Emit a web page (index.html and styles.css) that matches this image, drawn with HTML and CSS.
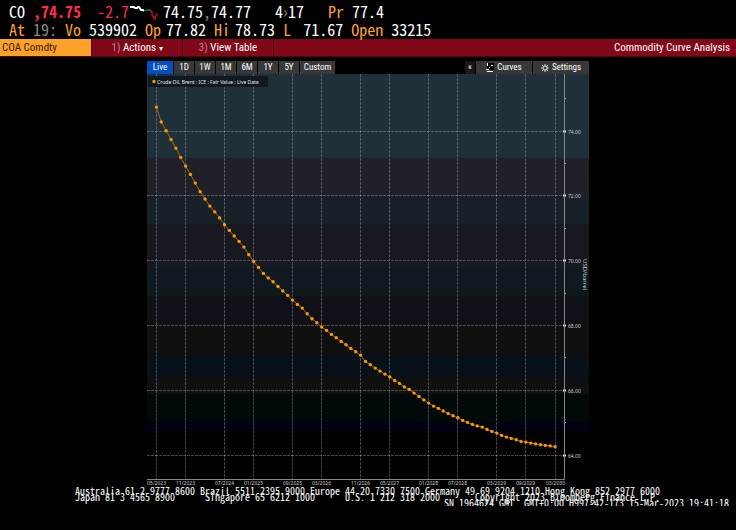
FILE: index.html
```html
<!DOCTYPE html>
<html lang="en">
<head>
  <meta charset="UTF-8">
  <meta name="viewport" content="width=device-width, initial-scale=1">
  <title>Commodity Curve Analysis</title>
  <link rel="stylesheet" href="styles.css">
</head>
<body>

<header class="quote">
  <div class="quote-row">
    <span>CO</span>
    <strong class="down">,74.75</strong>
    <span class="down change">-2.7</span>
    <svg class="spark" width="28" height="16" viewBox="0 0 28 16" aria-hidden="true">
      <path d="M0 2h4l1 1h2l1-1h1l2 3h2l1 1" fill="none" stroke="#fff" stroke-width="2"/>
      <path d="M15 6l2-1h3l2 2" fill="none" stroke="#0a8a20" stroke-width="1.3"/>
      <path d="M21 6l1 1v3l2 3 1 1 1-4 2-1" fill="none" stroke="#e01010" stroke-width="1.3"/>
    </svg>
    <span>74.75<i class="dim">,</i>74.77</span>
    <span class="lots">4<i class="dim">›</i>17</span>
    <span class="pair previous"><b>Pr</b><span>77.4</span></span>
  </div>
  <div class="quote-row">
    <b>At</b>
    <span class="dim">19:</span>
    <b>Vo</b>
    <span>539902</span>
    <span class="pair"><b>Op</b><span>77.82</span></span>
    <span class="pair"><b>Hi</b><span>78.73</span></span>
    <span class="pair wide"><b>L</b><span>71.67</span></span>
    <b>Open</b>
    <span>33215</span>
  </div>
</header>

<nav class="menu">
  <input class="ticker" type="text" value="COA Comdty" aria-label="Security">
  <button class="menu-item" type="button"><span class="num">1)</span> Actions <span class="caret">▾</span></button>
  <button class="menu-item" type="button"><span class="num">3)</span> View Table</button>
  <h1>Commodity Curve Analysis</h1>
</nav>

<main class="panel">
  <div class="tools">
    <button class="tab active" type="button">Live</button>
    <button class="tab" type="button">1D</button>
    <button class="tab" type="button">1W</button>
    <button class="tab" type="button">1M</button>
    <button class="tab" type="button">6M</button>
    <button class="tab" type="button">1Y</button>
    <button class="tab" type="button">5Y</button>
    <button class="tab custom" type="button">Custom</button>
    <button class="collapse" type="button">«</button>
    <button class="tool" type="button">
      <svg width="8" height="9" viewBox="0 0 8 9" aria-hidden="true">
        <path d="M1 0h7v7H1z" fill="#000"/>
        <path d="M1 0h1v3H1zM5 2h2v1H5zM3 4h1v1H3zM0 6h3v1H0zM1 8h6v1H1z" fill="#fff"/>
      </svg>
      Curves
    </button>
    <button class="tool" type="button">
      <svg width="8" height="8" viewBox="0 0 8 8" aria-hidden="true">
        <circle cx="4" cy="4" r="2" fill="none" stroke="#ccc" stroke-width="1.3"/>
        <path d="M4 0v1.500M4 6.500V8M0 4h1.500M6.500 4H8M1 1l1 1M6 6l1 1M7 1L6 2M2 6L1 7" stroke="#ccc"/>
      </svg>
      Settings
    </button>
  </div>
  <svg id="chart" viewBox="0 0 442 413" role="img" aria-label="Crude Oil, Brent fair value curve"></svg>
</main>

<footer class="contacts">
  <p>Australia 61 2 9777 8600 Brazil 5511 2395 9000 Europe 44 20 7330 7500 Germany 49 69 9204 1210 Hong Kong 852 2977 6000</p>
  <p>Japan 81 3 4565 8900      Singapore 65 6212 1000      U.S. 1 212 318 2000       Copyright 2023 Bloomberg Finance L.P.</p>
  <p class="serial">SN 1964624 GMT  GMT+0:00 H997-42-173 15-Mar-2023 19:41:18</p>
</footer>

<script src="chart.js"></script>
</body>
</html>
```
FILE: chart.js
```js
const chart = document.getElementById("chart");
const axisX = 417;
const axisY = 405;
const firstX = 9.4;
const stepX = 4.862;

// background bands, top edge and colour
const bands = [
  [0, "#203038"], [84, "#202028"], [122, "#182028"], [150, "#181820"],
  [193, "#101820"], [216, "#101818"], [222, "#101018"], [248, "#101010"],
  [281, "#081018"], [303, "#101010"], [320, "#000808"], [348, "#000010"],
  [358, "#000000"]
];

// month index and label
const months = [
  [0, "05/2023"], [6, "11/2023"], [14, "07/2024"], [20, "01/2025"],
  [28, "09/2025"], [34, "03/2026"], [42, "11/2026"], [48, "05/2027"],
  [56, "01/2028"], [62, "07/2028"], [70, "03/2029"], [76, "09/2029"],
  [82, "03/2030"]
];

// curve height for each contract month
const curve = [
  32.7, 47.5, 56.3, 65, 73.7, 83, 91.7, 100, 108.7, 117.3, 124.6, 131.7,
  137.5, 143.5, 150.3, 156, 161.6, 167, 172.7, 180.3, 187, 193, 199, 203.5,
  207.3, 212, 216.5, 221, 225.7, 230, 233.7, 239.3, 244.3, 248.3, 252.7,
  256, 260, 263.3, 267, 270.3, 274, 277.3, 280.7, 287, 290.3, 293.7, 296.7,
  299.7, 302.5, 306, 309, 312.5, 315, 318.7, 322, 325.5, 328.7, 331.7, 334,
  336.6, 339, 341.3, 343.3, 346, 348, 350, 351.5, 352.7, 355, 357, 358.7,
  361, 362.7, 364, 365.3, 367, 367.7, 368.7, 369.5, 370.3, 371, 371.5, 372.3
];

function add(name, attrs, text) {
  const el = document.createElementNS("http://www.w3.org/2000/svg", name);
  for (const key in attrs) el.setAttribute(key, attrs[key]);
  if (text) el.textContent = text;
  chart.appendChild(el);
}

function xAt(i) {
  return firstX + i * stepX;
}

function yAt(price) {
  return 57 + (74 - price) * 32.4;
}

bands.forEach(([top, fill], i) => {
  const bottom = i + 1 < bands.length ? bands[i + 1][0] : 413;
  add("rect", { x: 0, y: top, width: 442, height: bottom - top, fill });
});

months.forEach(([i, label]) => {
  const x = Math.floor(xAt(i)) + 0.5;
  add("line", { x1: x, y1: 0, x2: x, y2: axisY, class: "grid" });
  add("text", { x, y: 411, class: "label month" }, label);
});

for (let price = 74; price >= 64; price -= 2) {
  const y = Math.floor(yAt(price)) + 0.5;
  add("line", { x1: 0, y1: y, x2: axisX, y2: y, class: "grid" });
  add("rect", { x: axisX - 1, y: y - 1, width: 3, height: 2, fill: "#fff" });
  add("text", { x: axisX + 4, y: y + 2, class: "label" }, price.toFixed(2));
}

for (let price = 75; price >= 65; price -= 2) {
  add("rect", { x: axisX, y: Math.floor(yAt(price)), width: 2, height: 1, fill: "#aaa" });
}

add("path", { d: `M0 ${axisY + 0.5}H${axisX + 0.5}V0`, class: "axis" });
add("text", { class: "unit", transform: "translate(436 185) rotate(90)" }, "USD/barrel");

add("polyline", { points: curve.map((y, i) => `${xAt(i)},${y + 0.4}`).join(" "), class: "curve" });
curve.forEach((y, i) => {
  add("circle", { cx: xAt(i), cy: y + 0.4, r: 1.7, fill: "#ff9800" });
});

add("rect", { x: 1, y: 2, width: 120, height: 11, rx: 1, fill: "#101820" });
add("circle", { cx: 7, cy: 7.5, r: 1.7, fill: "#ff9800" });
add("text", { x: 10, y: 9.5, class: "label legend" }, "Crude Oil, Brent : ICE : Fair Value : Live Data");
```
FILE: styles.css
```css
* {
  box-sizing: border-box;
}

body {
  margin: 0;
  background: #000;
  color: #fff;
  font-family: "Roboto Condensed", "Noto Sans", sans-serif;
  font-size: 11px;
}

button {
  margin: 0;
  padding: 0;
  border: 0;
  color: #fff;
  font: inherit;
  cursor: pointer;
}

.quote {
  height: 39px;
  padding: 2px 9px 0;
  font-family: "Noto Sans Mono CJK JP", "DejaVu Sans Mono", monospace;
  font-size: 16px;
  line-height: 18px;
}

.quote-row {
  display: flex;
  gap: 8px;
  height: 18px;
}

.quote b {
  color: #ffa028;
  font-weight: normal;
}

.down {
  color: #ff2c48;
}

.change {
  margin-left: 8px;
}

.dim {
  color: #888;
  font-style: normal;
}

.spark {
  margin: 3px -3px 0 -7px;
}

.lots {
  margin-left: 16px;
}

.pair {
  display: flex;
  gap: 5px;
}

.wide {
  gap: 12px;
}

.previous {
  gap: 8px;
  margin-left: 16px;
}

.quote .dim {
  color: #888;
}

.menu {
  display: flex;
  height: 18px;
  background: #800818;
  border-bottom: 1px solid #500410;
}

.ticker {
  width: 92px;
  padding: 0 2px;
  border: 0;
  border-right: 1px solid #500410;
  background: #ffa028;
  color: #302000;
  font: inherit;
}

.menu-item {
  width: 91px;
  background: #800818;
  border-right: 1px solid #500410;
}

.num {
  color: #c080a0;
}

.caret {
  font-size: 8px;
}

h1 {
  margin: 0 6px 0 auto;
  font-size: 11px;
  font-weight: normal;
  line-height: 17px;
}

.panel {
  display: grid;
  grid-template-columns: minmax(320px, 442px);
  justify-content: center;
  padding-top: 4px;
}

.tools {
  display: flex;
  gap: 1px;
  height: 13px;
  font-size: 9px;
  line-height: 13px;
}

.tab,
.tool {
  background: #383838;
}

.tab {
  width: 20px;
}

.tools .active {
  width: 26px;
  background: #0050c0;
}

.tools .custom {
  width: 35px;
}

.collapse {
  width: 10px;
  margin-left: auto;
  background: #181818;
}

.tool {
  display: flex;
  align-items: center;
  justify-content: center;
  gap: 3px;
  width: 56px;
}

#chart {
  display: block;
  width: 100%;
}

.grid {
  stroke: #a0b0b8;
  stroke-opacity: 0.4;
  stroke-dasharray: 3 1;
}

.axis {
  fill: none;
  stroke: #888;
}

.curve {
  fill: none;
  stroke: #a06810;
}

.label {
  fill: #ccc;
  font: 5px "Noto Sans", sans-serif;
}

.month {
  text-anchor: middle;
}

.legend {
  fill: #eee;
}

.unit {
  fill: #ccc;
  font: 6px "Noto Sans", sans-serif;
}

.contacts {
  padding: 1px 7px 0 75px;
  font-family: "Noto Sans Mono CJK JP", "DejaVu Sans Mono", monospace;
  font-size: 10px;
  line-height: 6px;
}

.contacts p {
  margin: 0;
  white-space: pre;
}

.serial {
  text-align: right;
}
```
